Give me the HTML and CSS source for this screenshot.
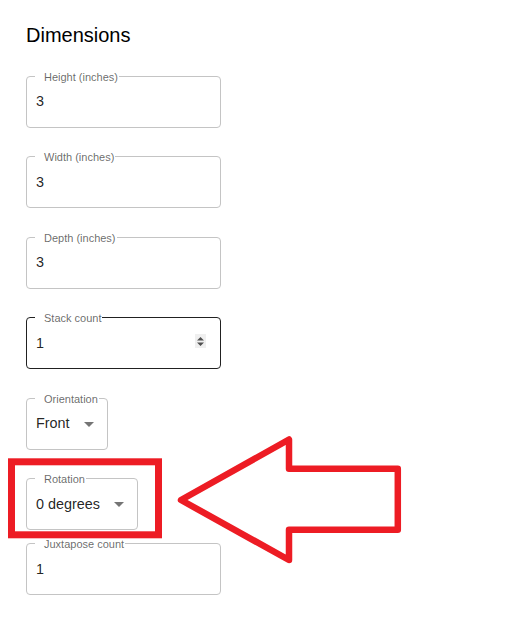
FILE: index.html
```html
<!DOCTYPE html>
<html lang="en">
<head>
<meta charset="utf-8">
<title>Dimensions</title>
<link rel="stylesheet" href="styles.css">
</head>
<body>
<div class="page">
  <h2 class="title">Dimensions</h2>
  <div class="fields">
    <div class="field">
      <span class="label">Height (inches)</span>
      <span class="value">3</span>
    </div>
    <div class="field">
      <span class="label">Width (inches)</span>
      <span class="value">3</span>
    </div>
    <div class="field">
      <span class="label">Depth (inches)</span>
      <span class="value">3</span>
    </div>
    <div class="field field--active">
      <span class="label">Stack count</span>
      <span class="value">1</span>
      <span class="spinner">
        <svg width="11" height="13" viewBox="0 0 11 13"><path d="M2 5.5 L5.5 2 L9 5.5 Z M2 7.5 L5.5 11 L9 7.5 Z" fill="#505050"/></svg>
      </span>
    </div>
    <div class="field field--select">
      <span class="label">Orientation</span>
      <span class="value">Front</span>
      <span class="caret"></span>
    </div>
    <div class="field field--select field--tight">
      <span class="label">Rotation</span>
      <span class="value">0 degrees</span>
      <span class="caret"></span>
    </div>
    <div class="field">
      <span class="label">Juxtapose count</span>
      <span class="value">1</span>
    </div>
  </div>
  <svg class="annotation" width="522" height="618" viewBox="0 0 522 618">
    <rect x="11.5" y="461.8" width="147" height="73" fill="none" stroke="#ed1c24" stroke-width="7"/>
    <path d="M181 500 L289 439.5 L289 468.7 L397.8 468.7 L397.8 529.8 L289 529.8 L289 560 Z" fill="none" stroke="#ed1c24" stroke-width="6.5" stroke-linejoin="round"/>
  </svg>
</div>
</body>
</html>
```

FILE: styles.css
```css
html, body {
  margin: 0;
  padding: 0;
  background: #ffffff;
}

.page {
  position: relative;
  width: 522px;
  height: 618px;
  box-sizing: border-box;
  padding: 23px 26px;
  font-family: "Liberation Sans", Arial, sans-serif;
  color: rgba(0, 0, 0, 0.87);
  overflow: hidden;
}

.title {
  margin: 0;
  font-size: 20px;
  line-height: 24px;
  font-weight: 400;
  color: #000;
}

.fields {
  margin-top: 28.5px;
  display: flex;
  flex-direction: column;
  align-items: flex-start;
}

.field {
  position: relative;
  box-sizing: border-box;
  width: 195px;
  height: 52px;
  margin-bottom: 28.6px;
  border: 1px solid #c4c4c4;
  border-radius: 4px;
  padding: 0 13px 0 9px;
  display: flex;
  align-items: center;
}

.field--active {
  border-color: #212121;
}

.field--select {
  width: auto;
  gap: 14px;
}

.field--tight {
  margin-bottom: 13px;
}

.label {
  position: absolute;
  top: -6px;
  left: 8px;
  padding: 0 1px 0 9px;
  background: #ffffff;
  font-size: 11px;
  line-height: 12px;
  color: rgba(0, 0, 0, 0.6);
  white-space: nowrap;
}

.value {
  font-size: 14.4px;
  line-height: 17px;
  color: rgba(0, 0, 0, 0.87);
  flex: 1 1 auto;
  white-space: nowrap;
}

.spinner {
  width: 11px;
  height: 14px;
  margin-right: 1px;
  margin-top: -4px;
  background: #efefef;
  display: flex;
  align-items: center;
  justify-content: center;
}

.caret {
  width: 0;
  height: 0;
  border-left: 5px solid transparent;
  border-right: 5px solid transparent;
  border-top: 5px solid #757575;
  margin-top: 1px;
}

.annotation {
  position: absolute;
  top: 0;
  left: 0;
  pointer-events: none;
}
```
